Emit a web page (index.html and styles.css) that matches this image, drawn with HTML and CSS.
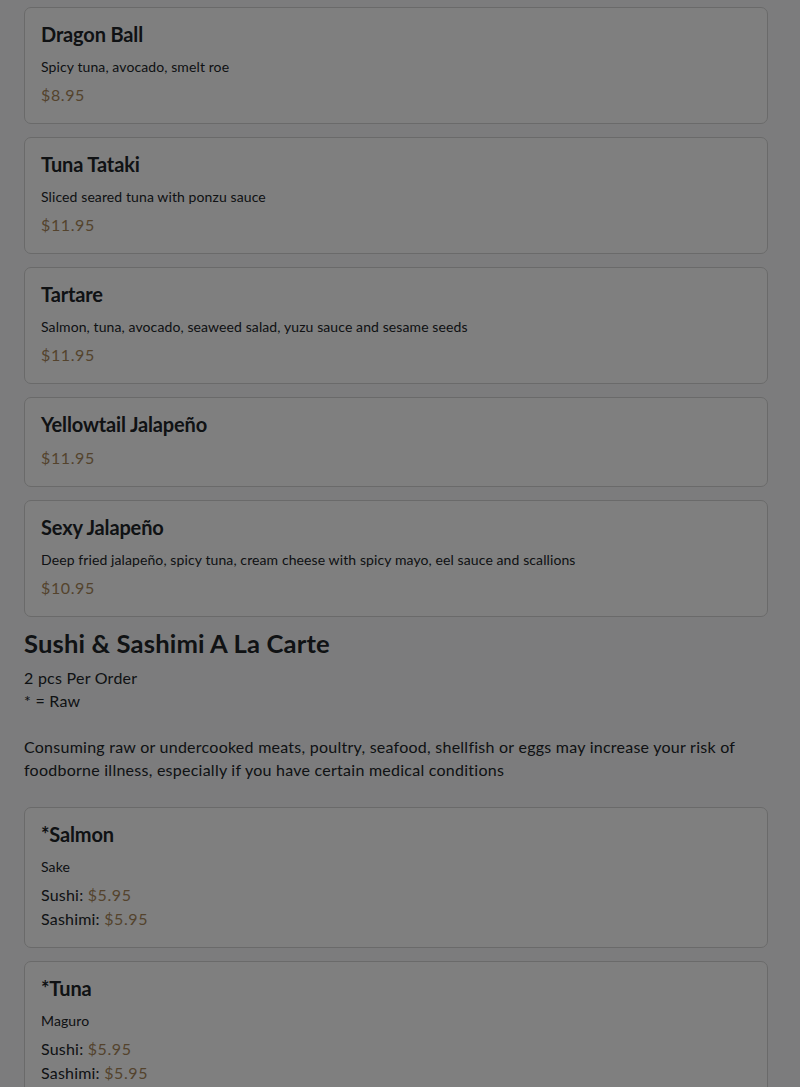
FILE: index.html
```html
<!DOCTYPE html>
<html lang="en">
<head>
  <meta charset="UTF-8" />
  <title>Menu</title>
  <link rel="stylesheet" href="styles.css">
</head>
<body>

  <div class="menu">
    <div class="item">
      <h5>Dragon Ball</h5>
      <p class="desc">Spicy tuna, avocado, smelt roe</p>
      <div class="price">$8.95</div>
    </div>

    <div class="item">
      <h5>Tuna Tataki</h5>
      <p class="desc">Sliced seared tuna with ponzu sauce</p>
      <div class="price">$11.95</div>
    </div>

    <div class="item">
      <h5>Tartare</h5>
      <p class="desc">Salmon, tuna, avocado, seaweed salad, yuzu sauce and sesame seeds</p>
      <div class="price">$11.95</div>
    </div>

    <div class="item">
      <h5>Yellowtail Jalapeño</h5>
      <div class="price">$11.95</div>
    </div>

    <div class="item">
      <h5>Sexy Jalapeño</h5>
      <p class="desc">Deep fried jalapeño, spicy tuna, cream cheese with spicy mayo, eel sauce and scallions</p>
      <div class="price">$10.95</div>
    </div>

    <h3>Sushi &amp; Sashimi A La Carte</h3>
    <p class="note">2 pcs Per Order<br>* = Raw<br><br>Consuming raw or undercooked meats, poultry, seafood, shellfish or eggs may increase your risk of foodborne illness, especially if you have certain medical conditions</p>

    <div class="item">
      <h5>*Salmon</h5>
      <p class="desc">Sake</p>
      <div class="line">Sushi: <span class="price">$5.95</span></div>
      <div class="line">Sashimi: <span class="price">$5.95</span></div>
    </div>

    <div class="item">
      <h5>*Tuna</h5>
      <p class="desc">Maguro</p>
      <div class="line">Sushi: <span class="price">$5.95</span></div>
      <div class="line">Sashimi: <span class="price">$5.95</span></div>
    </div>
  </div>

  <div class="backdrop"></div>

</body>
</html>
```

FILE: styles.css
```css
body {
  margin: 0;
  font-family: 'Lato', sans-serif;
  background: #f8f9fa;
  color: #212529;
}

.menu {
  padding: 7px 32px 0 24px;
}

.item {
  background: #fff;
  border: 1px solid #d4d4d4;
  border-radius: 7px;
  padding: 14px 16px 16px;
  margin-bottom: 13px;
}

h5 {
  font-size: 20px;
  font-weight: 700;
  line-height: 24px;
  letter-spacing: -0.15px;
  margin: 0 0 10px;
}

.desc {
  font-size: 14px;
  line-height: 21px;
  letter-spacing: 0.1px;
  margin: 0 0 6px;
}

.price {
  font-size: 16px;
  line-height: 24px;
  letter-spacing: 0.6px;
  color: #a8875a;
}

.line {
  font-size: 16px;
  line-height: 24px;
  letter-spacing: 0.2px;
}

h3 {
  font-size: 25.6px;
  font-weight: 700;
  line-height: 1.2;
  letter-spacing: 0.15px;
  margin: -2px 0 7px;
}

.note {
  font-size: 16px;
  line-height: 23px;
  letter-spacing: 0.25px;
  margin: 0 0 26px;
}

.backdrop {
  position: fixed;
  inset: 0;
  background: rgba(0, 0, 0, 0.5);
}
```
